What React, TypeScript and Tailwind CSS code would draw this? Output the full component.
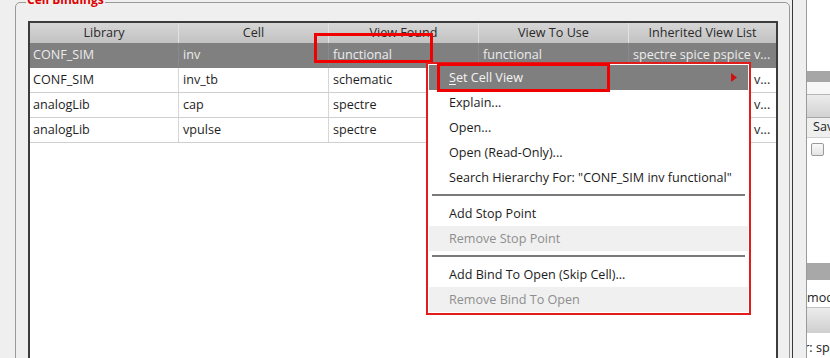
import React from "react";

const cols = [148, 150, 150, 150, 148];
const headers = ["Library", "Cell", "View Found", "View To Use", "Inherited View List"];
const rows = [
  ["CONF_SIM", "inv", "functional", "functional", "spectre spice pspice v..."],
  ["CONF_SIM", "inv_tb", "schematic", "schematic", "spectre spice pspice v..."],
  ["analogLib", "cap", "spectre", "spectre", "spectre spice pspice v..."],
  ["analogLib", "vpulse", "spectre", "spectre", "spectre spice pspice v..."],
];

function MenuItem({ label, disabled, active, arrow, underlineFirst }: { label: string; disabled?: boolean; active?: boolean; arrow?: boolean; underlineFirst?: boolean }) {
  const base = "h-[25px] flex items-center pl-[20px] pr-[10px] whitespace-nowrap";
  const cls = active
    ? `${base} bg-[#7f7f7f] text-[#f4f4f4]`
    : disabled
    ? `${base} bg-[#f0f0f0] text-[#8e8e8e]`
    : `${base} bg-white text-[#1c1c1c]`;
  return (
    <div className={cls}>
      <span className="flex-1 pt-[1px]">
        {underlineFirst ? (
          <>
            <span className="underline underline-offset-2">{label[0]}</span>
            {label.slice(1)}
          </>
        ) : (
          label
        )}
      </span>
      {arrow && (
        <svg width="6" height="9" viewBox="0 0 6 9" className="mr-[1px]">
          <polygon points="0,0 6,4.5 0,9" fill="#d01010" />
        </svg>
      )}
    </div>
  );
}

function Separator() {
  return (
    <div className="h-[11px] pt-[4px] px-[3px]">
      <div className="h-[2px] bg-[#7a7a7a]" />
    </div>
  );
}

export default function App() {
  return (
    <div className="relative w-[830px] h-[358px] overflow-hidden bg-[#efefef] font-['Open_Sans',sans-serif] text-[12.6px] flex">
      {/* left area */}
      <div className="flex w-[806px] shrink-0">
        <div className="ml-[15px] mt-[2px] w-[775px] h-[420px] border border-[#9a9a9a] rounded-t-[5px] shrink-0">
          <div className="-mt-[11px] ml-[10px] h-[16px] leading-[16px] text-[12px] font-bold text-[#e00000]">
            <span className="bg-[#efefef] px-[1px]">Cell Bindings</span>
          </div>
          <div className="mt-[13px] ml-[12px] w-[750px] h-[400px] border-2 border-[#3c3c3c] bg-white">
            {/* header */}
            <div className="flex h-[20px] bg-gradient-to-b from-[#d6d6d6] to-[#c2c2c2] text-[#2a2a2a]">
              {headers.map((h, i) => (
                <div
                  key={h}
                  style={{ width: cols[i] }}
                  className={`flex items-center justify-center leading-none ${i > 0 ? "border-l border-[#e2e2e2]" : ""}`}
                >
                  {h}
                </div>
              ))}
            </div>
            {rows.map((r, ri) => (
              <div
                key={ri}
                className={`flex h-[25px] border-b ${ri === 0 ? "bg-[#808080] text-[#ececec] border-[#808080]" : "bg-white text-[#1e1e1e] border-[#cfcfcf]"}`}
              >
                {r.map((c, ci) => (
                  <div
                    key={ci}
                    style={{ width: cols[ci] }}
                    className={`flex items-center whitespace-nowrap overflow-hidden ${ci > 0 ? `pl-[4px] border-l ${ri === 0 ? "border-[#8a8a8a]" : "border-[#d6d6d6]"}` : "pl-[3px]"}`}
                  >
                    {c}
                  </div>
                ))}
              </div>
            ))}
          </div>
        </div>
        <div className="w-[2px]" />
        <div className="w-[1px] bg-[#3a3a3a]" />
      </div>
      {/* right panel */}
      <div className="flex-1 border-l border-[#9a9a9a] overflow-hidden flex flex-col bg-white text-[#222]">
        <div className="h-[72px] bg-white" />
        <div className="h-[11px] bg-[#a6a6a6]" />
        <div className="h-[12px] bg-[#f7f7f7]" />
        <div className="h-[23px] border-t border-[#b5b5b5] bg-gradient-to-b from-[#ececec] to-[#d2d2d2]" />
        <div className="h-[21px] border-t border-[#a8a8a8] border-b border-b-[#d0d0d0] bg-[#efefef] flex items-center pl-[6px] pt-[1px] whitespace-nowrap">
          Save
        </div>
        <div className="h-[127px] bg-white pt-[5px] pl-[4px]">
          <div className="w-[13px] h-[13px] border border-[#9a9a9a] rounded-[2px] bg-gradient-to-b from-[#fafafa] to-[#e4e4e4]" />
        </div>
        <div className="h-[17px] bg-[#a8a8a8]" />
        <div className="h-[28px] bg-white flex items-end pb-[0px] whitespace-nowrap">model</div>
        <div className="h-[26px] border-t border-[#c0c0c0] bg-gradient-to-b from-[#ececec] to-[#cfcfcf]" />
        <div className="flex-1 bg-white whitespace-nowrap -ml-[6px] pt-[6px]">ir: spectre</div>
      </div>

      {/* highlight rectangle on "View Found" */}
      <div className="absolute left-[314px] top-[33px] w-[119px] h-[30px] border-[3px] border-[#f00000] pointer-events-none" />

      {/* context menu */}
      <div className="absolute left-[426px] top-[62px] w-[325px] h-[253px] border-2 border-[#e21b1b] bg-white p-[1px]">
        <MenuItem label="Set Cell View" active arrow underlineFirst />
        <MenuItem label="Explain..." />
        <MenuItem label="Open..." />
        <MenuItem label="Open (Read-Only)..." />
        <MenuItem label={'Search Hierarchy For: "CONF_SIM inv functional"'} />
        <Separator />
        <MenuItem label="Add Stop Point" />
        <MenuItem label="Remove Stop Point" disabled />
        <Separator />
        <MenuItem label="Add Bind To Open (Skip Cell)..." />
        <MenuItem label="Remove Bind To Open" disabled />
      </div>

      {/* highlight rectangle on "Set Cell View" */}
      <div className="absolute left-[437px] top-[63px] w-[173px] h-[29px] border-[3px] border-[#f00000] pointer-events-none" />
    </div>
  );
}
